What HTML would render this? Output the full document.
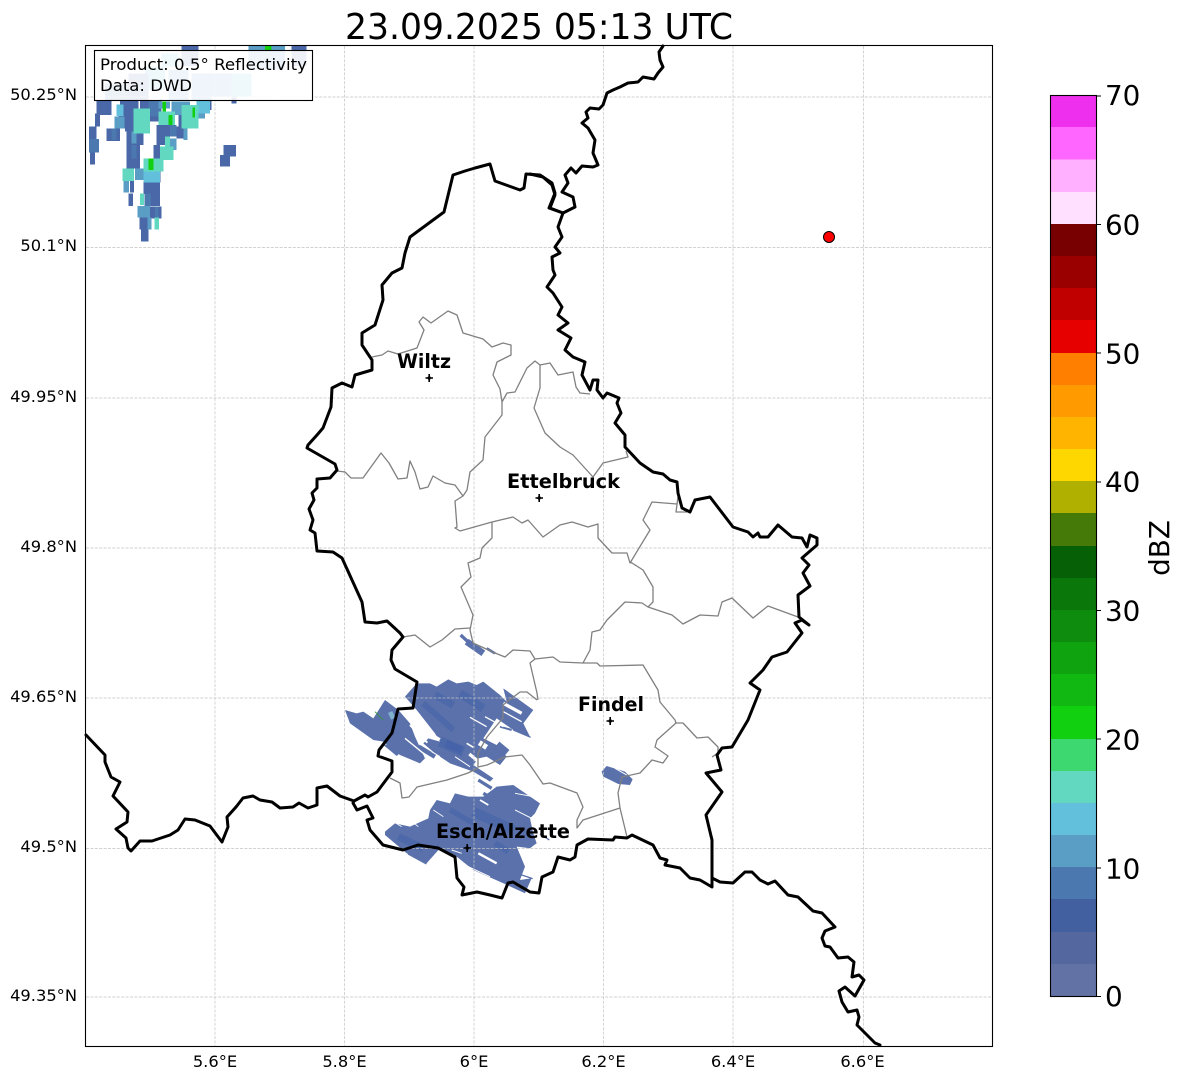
<!DOCTYPE html>
<html><head><meta charset="utf-8"><style>
html,body{margin:0;padding:0;background:#fff}
svg{display:block}
text{font-family:"DejaVu Sans","Liberation Sans",sans-serif;fill:#000}
</style></head><body>
<svg width="1184" height="1081" viewBox="0 0 1184 1081" xmlns="http://www.w3.org/2000/svg">
<rect width="1184" height="1081" fill="#fff"/>
<text x="539" y="39" font-size="36" text-anchor="middle" textLength="388" lengthAdjust="spacingAndGlyphs">23.09.2025 05:13 UTC</text>

<!-- NW rain -->
<g transform="translate(85,95) scale(.3333)" shape-rendering="crispEdges">
<g fill="#4a68a8"><rect x="35" y="15" width="45" height="45"/><rect x="30" y="55" width="15" height="40"/><rect x="12" y="95" width="22" height="38"/><rect x="15" y="172" width="15" height="36"/><rect x="105" y="15" width="25" height="55"/><rect x="100" y="60" width="25" height="40"/><rect x="125" y="15" width="35" height="55"/><rect x="120" y="65" width="30" height="45"/><rect x="125" y="110" width="50" height="40"/><rect x="125" y="150" width="40" height="70"/><rect x="135" y="258" width="12" height="35"/><rect x="130" y="295" width="14" height="38"/><rect x="212" y="228" width="15" height="35"/><rect x="175" y="262" width="50" height="35"/><rect x="198" y="295" width="27" height="38"/><rect x="195" y="335" width="35" height="35"/><rect x="163" y="368" width="35" height="35"/><rect x="168" y="403" width="22" height="37"/><rect x="205" y="150" width="20" height="45"/><rect x="215" y="90" width="40" height="60"/><rect x="165" y="15" width="30" height="25"/><rect x="195" y="40" width="25" height="40"/><rect x="280" y="60" width="20" height="40"/><rect x="275" y="95" width="20" height="35"/><rect x="370" y="15" width="10" height="30"/><rect x="65" y="100" width="40" height="38"/></g>
<g fill="#4b78ae"><rect x="12" y="132" width="30" height="40"/><rect x="190" y="15" width="40" height="50"/><rect x="178" y="295" width="20" height="38"/><rect x="210" y="335" width="10" height="35"/><rect x="140" y="150" width="14" height="40"/><rect x="80" y="100" width="14" height="35"/><rect x="255" y="90" width="20" height="35"/></g>
<g fill="#5a9dc5"><rect x="88" y="65" width="30" height="35"/><rect x="150" y="220" width="25" height="35"/><rect x="115" y="258" width="17" height="35"/><rect x="157" y="333" width="38" height="35"/><rect x="187" y="368" width="12" height="35"/><rect x="255" y="130" width="20" height="35"/><rect x="220" y="20" width="35" height="20"/><rect x="260" y="20" width="55" height="40"/><rect x="295" y="100" width="12" height="35"/><rect x="330" y="45" width="30" height="25"/><rect x="140" y="110" width="14" height="35"/></g>
<g fill="#62c0dc"><rect x="95" y="28" width="20" height="35"/><rect x="175" y="228" width="50" height="35"/><rect x="335" y="15" width="40" height="40"/></g>
<g fill="#62d8c0"><rect x="145" y="40" width="50" height="75"/><rect x="112" y="220" width="35" height="38"/><rect x="175" y="190" width="60" height="40"/><rect x="165" y="295" width="12" height="35"/><rect x="208" y="368" width="14" height="35"/><rect x="225" y="155" width="40" height="40"/><rect x="240" y="125" width="15" height="35"/><rect x="220" y="50" width="50" height="40"/><rect x="290" y="30" width="50" height="70"/></g>
<g fill="#10d010"><rect x="190" y="190" width="15" height="35"/><rect x="250" y="60" width="12" height="30"/><rect x="233" y="20" width="10" height="30"/><rect x="322" y="38" width="8" height="30"/></g>
</g>
<g transform="translate(85,40) scale(.3333)" shape-rendering="crispEdges">
<rect x="290" y="18" width="50" height="60" fill="#4a68a8"/><rect x="230" y="40" width="50" height="40" fill="#62c0dc"/>
<rect x="180" y="80" width="60" height="70" fill="#62c0dc"/><rect x="60" y="130" width="100" height="50" fill="#4b78ae"/>
<rect x="250" y="90" width="60" height="90" fill="#5a9dc5"/><rect x="320" y="100" width="60" height="80" fill="#5a9dc5"/>
<rect x="380" y="100" width="60" height="70" fill="#5a9dc5"/><rect x="440" y="100" width="60" height="70" fill="#62c0dc"/>
<rect x="130" y="100" width="60" height="80" fill="#4a68a8"/>
<rect x="490" y="18" width="110" height="70" fill="#5a9dc5"/><rect x="540" y="18" width="20" height="14" fill="#10d010"/>
<rect x="620" y="18" width="45" height="60" fill="#4a68a8"/><rect x="440" y="170" width="15" height="20" fill="#4a68a8"/>
<rect x="415" y="315" width="38" height="35" fill="#4a68a8"/><rect x="405" y="345" width="15" height="35" fill="#4a68a8"/><rect x="420" y="350" width="15" height="30" fill="#4a68a8"/>
</g>

<!-- SE rain -->
<g transform="translate(340,630) scale(.3333)">
<g fill="#5a71ab">
<polygon points="195,200 230,160 270,160 290,170 325,148 350,160 385,155 410,165 430,155 480,195 500,215 490,175 580,240 550,280 570,320 520,300 470,265 460,280 440,310 430,325 470,345 500,380 480,405 440,380 415,385 400,405 460,445 450,455 400,425 330,400 285,370 250,340 265,325 300,335 285,310 230,240"/>
<polygon points="15,240 50,250 70,245 100,265 135,210 175,240 210,280 225,320 255,385 240,400 180,375 130,335 100,330 30,280"/>
<polygon points="130,345 160,340 185,365 170,378"/>
<polygon points="135,605 165,580 210,590 265,565 270,540 290,510 330,520 345,490 385,500 430,500 470,470 520,465 600,520 585,550 570,565 580,610 590,640 570,655 530,650 555,710 540,750 575,745 555,790 490,760 400,720 350,680 300,655 260,700 200,670 135,615"/>
<polygon points="800,408 855,425 878,448 870,465 835,462 790,440 785,425"/>
</g>
<g stroke="#5a71ab" fill="none">
<path d="M362,15L400,50" stroke-width="10"/><path d="M380,35L430,70" stroke-width="20"/><path d="M440,55L465,70" stroke-width="8"/>
<path d="M415,450L455,475" stroke-width="10"/><path d="M430,490L465,510" stroke-width="10"/>
<path d="M520,300L572,322" stroke-width="4"/><path d="M480,290L515,300" stroke-width="6"/>
<path d="M500,720L578,746" stroke-width="4"/><path d="M205,670L260,700" stroke-width="8"/>
<path d="M600,612L628,630" stroke-width="4"/><path d="M470,345L500,370" stroke-width="26"/><path d="M235,350L285,380" stroke-width="14"/>
</g>
<g stroke="#4d69a9" fill="none">
<path d="M285,195L340,225" stroke-width="22"/><path d="M360,190L430,235" stroke-width="25"/><path d="M250,220L340,300" stroke-width="18"/>
<path d="M300,335L370,365" stroke-width="30"/><path d="M400,545L520,600" stroke-width="30"/><path d="M465,640L505,665" stroke-width="18"/>
<path d="M175,620L250,655" stroke-width="22"/><path d="M330,540L400,580" stroke-width="16"/>
</g>
<path d="M318,340L365,360" stroke="#4663aa" stroke-width="22" fill="none"/>
<g stroke="#fff" fill="none">
<path d="M390,262L440,290" stroke-width="4"/><path d="M270,310L300,328" stroke-width="7"/><path d="M380,340L400,352" stroke-width="5"/>
<path d="M418,338L440,352" stroke-width="16"/><path d="M435,260L490,290" stroke-width="4"/><path d="M490,220L545,250" stroke-width="10"/>
<path d="M490,245L545,275" stroke-width="4"/><path d="M345,380L390,410" stroke-width="3"/><path d="M275,365L300,380" stroke-width="3"/>
<path d="M388,372L412,392" stroke-width="10"/><path d="M195,325L250,370" stroke-width="4"/><path d="M210,285L262,338" stroke-width="6"/>
<path d="M415,670L470,700" stroke-width="7"/><path d="M385,710L450,740" stroke-width="3"/><path d="M335,660L365,670" stroke-width="3"/>
<path d="M160,575L185,590" stroke-width="2.5"/><path d="M210,570L235,590" stroke-width="2.5"/><path d="M280,540L310,560" stroke-width="2.5"/>
<path d="M420,510L445,525" stroke-width="5"/><path d="M525,490L580,500" stroke-width="3"/><path d="M525,540L575,565" stroke-width="3"/>
<path d="M825,415L860,435" stroke-width="3"/><path d="M395,430L440,450" stroke-width="3"/>
</g>
<path d="M105,245L130,270" stroke="#2f9a2f" stroke-width="2.5" fill="none"/>
<rect x="148" y="245" width="14" height="22" fill="#7fb0cc" transform="rotate(-25 155 256)"/>
</g>

<!-- gridlines -->
<g stroke="#c2c2c2" stroke-width=".7" stroke-dasharray="3,1.4" fill="none">
<path d="M215,46V1046M344.5,46V1046M474,46V1046M603.5,46V1046M733,46V1046M863.5,46V1046"/>
<path d="M86,97H992M86,247.5H992M86,398H992M86,548H992M86,698H992M86,848.5H992M86,997H992"/>
</g>

<!-- interior boundaries -->
<g fill="none" stroke="#808080" stroke-width="1.3" stroke-linejoin="round">
<path d="M372,357L382,355L388,351L398,354L417,348L424,330L419,322L423,317L431,323L448,311L457,315L463,333L483,339L492,347L503,343L511,345L511,355L497,362L493,375L500,389L502,402L507,393L515,392L527,368L535,361L540,365L540,388L534,408L545,433L560,447L573,455L593,477L603,463L628,457L626,451"/>
<path d="M540,365L550,363L558,375L573,372L576,387L580,393L590,394"/>
<path d="M502,402L502,415L485,437L483,460L470,472L467,490L463,496L455,501L457,527L455,528L460,531L492,522L513,517L522,523L528,520L543,537L560,525L572,522L588,527L598,524L598,538L612,553L627,553L630,563L650,530L643,520L652,502L677,504L678,497L676,512L687,512"/>
<path d="M337,471L345,472L351,478L363,478L381,453L389,463L398,479L407,478L410,461L415,472L420,489L428,487L433,476L445,483L455,485L463,496"/>
<path d="M492,522L492,538L482,548L480,558L468,563L471,577L461,587L473,615L470,630L473,643L495,653L505,657L513,650L530,651L535,659L530,663L537,693L538,700"/>
<path d="M403,637L415,635L430,647L442,640L455,629L470,628"/>
<path d="M535,659L553,657L560,662L583,663L597,663L600,666L643,665L658,690L660,702L675,720L676,723L683,723L697,738L708,737L718,747L718,753L712,757"/>
<path d="M583,663L590,650L592,632L600,630L607,620L625,602L642,603L648,607L672,615L683,624L700,615L718,616L722,602L732,598L753,618L768,606L798,617"/>
<path d="M648,607L653,602L653,587L643,570L632,563L630,562"/>
<path d="M676,723L657,740L655,747L668,756L663,763L652,760L640,773L622,777L618,793L620,808L627,837"/>
<path d="M620,808L583,820L577,828L577,820L583,807L577,793L550,783L543,784L530,765L522,755L505,757L487,765L478,767L478,753L487,737L503,718L503,705L520,692L527,692L537,700"/>
<path d="M478,768L468,773L447,780L417,787L409,797L402,798L400,783L390,778"/>
</g>

<!-- national borders -->
<g fill="none" stroke="#000" stroke-width="3" stroke-linejoin="round" stroke-linecap="round">
<path d="M86,735L105,755L105,762L111,777L120,782L113,796L128,812L127,822L116,829L126,838L128,848L131,851L140,841L152,841L170,835L178,830L185,819L195,820L210,826L222,842L228,827L227,817L236,807L243,798L253,796L260,800L272,802L280,808L293,807L299,803L308,808L317,805L317,788L327,786L340,796L354,801L365,795L368,797L377,792L392,772L392,761L378,756L379,750L392,733L398,709L413,708L417,682L395,669L391,660L392,650L403,637L400,633L387,621L377,623L365,622L362,602L342,558L333,552L317,551L315,533L310,530L313,520L309,509L314,500L312,493L317,488L317,479L330,478L337,470L335,464L307,448L308,445L317,435L323,428L331,407L332,388L342,383L352,387L355,375L372,370L372,360L362,345L362,333L375,325L383,300L382,285L392,273L402,268L405,253L410,237L444,212L453,175L465,171L475,168L490,164L495,181L520,190L524,188L526,174L540,175L552,183L555,193L549,208L563,213L558,227L562,237L555,247L560,253L552,257L553,270L555,275L547,287L553,293L562,307L558,315L568,323L558,330L571,338L565,350L573,357L585,362L582,375L590,390L593,380L598,380L597,390L603,398L607,393L619,398L617,403L621,413L615,423L625,435L625,447L640,463L653,472L663,474L670,480L677,482L678,493L682,508L690,512L695,500L710,497L733,527L748,532L753,537L758,533L760,537L768,537L778,525L792,537L802,538L807,547L810,535L817,538L817,545L802,558L809,565L803,573L810,586L798,595L799,617L809,625L802,620L795,623L802,633L787,652L772,657L763,670L750,683L760,690L748,720L732,747L722,748L717,755L721,770L706,773L722,792L706,815L712,840L712,887L700,880L690,878L680,868L665,865L667,860L660,858L653,845L632,835L627,838L615,837L613,840L588,839L577,845L575,857L570,860L558,857L553,872L542,877L539,893L530,892L513,882L508,883L502,898L490,895L477,892L462,895L464,887L457,878L455,857L438,848L418,845L403,850L383,845L370,830L367,820L373,818L367,806L357,810L353,803L354,801"/>
<path d="M663,46L659,52L660,60L663,67L658,73L654,79L643,77L638,82L628,83L620,87L613,90L607,93L603,105L599,109L590,108L586,112L588,118L582,123L588,128L595,140L593,153L598,165L593,167L582,166L576,173L571,168L565,175L568,183L562,192L573,197L575,207L563,213L550,208L555,195L552,185L543,177L530,174"/>
<path d="M712,878L720,882L733,883L745,872L752,872L760,880L768,884L775,881L788,895L798,897L813,911L822,913L835,927L825,931L822,938L825,946L830,947L838,958L848,957L854,962L852,977L859,975L864,980L855,996L845,987L839,991L842,1002L848,1012L857,1010L859,1017L857,1025L875,1043L880,1045"/>
</g>

<!-- axes frame -->
<rect x="85.5" y="45.5" width="907" height="1001" fill="none" stroke="#000" stroke-width="1.1"/>

<!-- legend box -->
<rect x="94.5" y="50.5" width="218" height="50" fill="#fff" fill-opacity=".9" stroke="#000" stroke-width="1.1"/>
<text x="100" y="70" font-size="16.3" textLength="207" lengthAdjust="spacingAndGlyphs">Product: 0.5° Reflectivity</text>
<text x="100" y="91" font-size="16.3" textLength="92" lengthAdjust="spacingAndGlyphs">Data: DWD</text>

<!-- city markers -->
<g stroke="#000" stroke-width="1.6" fill="none">
<path d="M425.5,378H433M429.2,374V382M535.5,498H543M539.2,494V502M606.5,721H614M610.2,717V725M463.5,848H471M467.2,844V852"/>
</g>
<g fill="#000"><circle cx="429.2" cy="378" r="1.7"/><circle cx="539.2" cy="498" r="1.7"/><circle cx="610.2" cy="721" r="1.7"/><circle cx="467.2" cy="848" r="1.7"/></g>
<g font-size="19.44" font-weight="bold" text-anchor="middle">
<text x="424" y="368" textLength="54" lengthAdjust="spacingAndGlyphs">Wiltz</text>
<text x="563.5" y="488" textLength="113" lengthAdjust="spacingAndGlyphs">Ettelbruck</text>
<text x="611" y="711" textLength="66" lengthAdjust="spacingAndGlyphs">Findel</text>
<text x="503" y="838" textLength="134" lengthAdjust="spacingAndGlyphs">Esch/Alzette</text>
</g>

<!-- radar site -->
<circle cx="829" cy="237" r="5.5" fill="#f00" stroke="#000" stroke-width="1"/>

<!-- axis labels -->
<g font-size="16.3" text-anchor="end">
<text x="77" y="100">50.25°N</text><text x="77" y="251">50.1°N</text><text x="77" y="402">49.95°N</text>
<text x="77" y="552">49.8°N</text><text x="77" y="702">49.65°N</text><text x="77" y="852">49.5°N</text><text x="77" y="1001">49.35°N</text>
</g>
<g font-size="16.3" text-anchor="middle">
<text x="215" y="1067">5.6°E</text><text x="344.5" y="1067">5.8°E</text><text x="474" y="1067">6°E</text>
<text x="603.5" y="1067">6.2°E</text><text x="733" y="1067">6.4°E</text><text x="862.5" y="1067">6.6°E</text>
</g>

<!-- colorbar -->
<g shape-rendering="crispEdges">
<rect x="1051" y="95.5" width="45" height="32" fill="#ee30ee"/><rect x="1051" y="127" width="45" height="33" fill="#ff66ff"/>
<rect x="1051" y="159.5" width="45" height="33" fill="#ffb0ff"/><rect x="1051" y="192" width="45" height="32" fill="#ffe0ff"/>
<rect x="1051" y="224" width="45" height="32.5" fill="#780000"/><rect x="1051" y="256" width="45" height="32.5" fill="#9a0000"/>
<rect x="1051" y="288" width="45" height="32.5" fill="#c00000"/><rect x="1051" y="320" width="45" height="33" fill="#e60000"/>
<rect x="1051" y="353" width="45" height="32.5" fill="#ff8000"/><rect x="1051" y="385" width="45" height="32.5" fill="#ff9b00"/>
<rect x="1051" y="417" width="45" height="32.5" fill="#ffb400"/><rect x="1051" y="449" width="45" height="33" fill="#ffd700"/>
<rect x="1051" y="481" width="45" height="32.5" fill="#b0b000"/><rect x="1051" y="513" width="45" height="33" fill="#457a08"/>
<rect x="1051" y="546" width="45" height="32.5" fill="#066006"/><rect x="1051" y="578" width="45" height="32.5" fill="#0a770a"/>
<rect x="1051" y="610" width="45" height="32.5" fill="#0d8c0d"/><rect x="1051" y="642" width="45" height="32.5" fill="#0fa30f"/>
<rect x="1051" y="674" width="45" height="33" fill="#12b812"/><rect x="1051" y="706" width="45" height="33" fill="#10d010"/>
<rect x="1051" y="739" width="45" height="32.5" fill="#3dd870"/><rect x="1051" y="771" width="45" height="32.5" fill="#62d8c0"/>
<rect x="1051" y="803" width="45" height="33" fill="#62c0dc"/><rect x="1051" y="835" width="45" height="33" fill="#5a9dc5"/>
<rect x="1051" y="867" width="45" height="33" fill="#4b78ae"/><rect x="1051" y="899" width="45" height="33" fill="#425f9f"/>
<rect x="1051" y="932" width="45" height="32.5" fill="#54689f"/><rect x="1051" y="964" width="45" height="32" fill="#6272a5"/>
</g>
<rect x="1050.5" y="95.5" width="46" height="901" fill="none" stroke="#000" stroke-width="1.1"/>
<path d="M1096,96H1101M1096,224.5H1101M1096,353H1101M1096,482H1101M1096,610.5H1101M1096,739H1101M1096,868H1101M1096,996.5H1101" stroke="#000" stroke-width="1.1"/>
<g font-size="27.8">
<text x="1105" y="105">70</text><text x="1105" y="234.5">60</text><text x="1105" y="363.5">50</text><text x="1105" y="491.5">40</text>
<text x="1105" y="620.5">30</text><text x="1105" y="749.5">20</text><text x="1105" y="878.5">10</text><text x="1105" y="1006">0</text>
</g>
<text transform="translate(1169,548) rotate(-90)" font-size="27.8" text-anchor="middle">dBZ</text>
</svg>
</body></html>
